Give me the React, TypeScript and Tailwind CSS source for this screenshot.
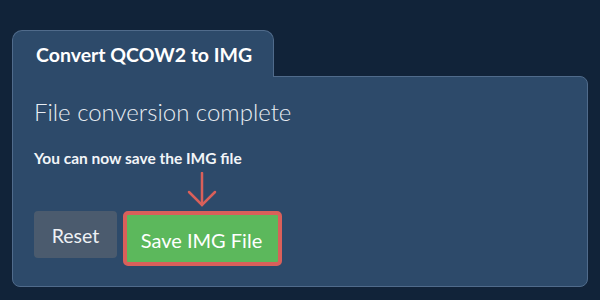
import React from "react";

export default function App() {
  return (
    <div
      className="w-[600px] h-[300px] bg-[#112339] pt-[30px] px-[12px] overflow-hidden"
      style={{ fontFamily: "Lato, 'Open Sans', sans-serif" }}
    >
      <div className="relative z-10 -mb-px w-[262px] h-[47px] bg-[#2d4a6a] border border-b-0 border-[#506b8b] rounded-t-[10px] pl-[23px] flex items-center">
        <span className="text-[19.5px] font-bold text-white leading-none pt-[2px] whitespace-nowrap">Convert QCOW2 to IMG</span>
      </div>
      <div className="h-[211px] bg-[#2d4a6a] border border-[#506b8b] rounded-b-[8px] rounded-tr-[8px] px-[21px] pt-[20px]">
        <div className="text-[24px] leading-[29px] font-light text-[#e8edf2] whitespace-nowrap">File conversion complete</div>
        <div className="mt-[23px] text-[15.5px] leading-[18px] font-bold text-[#f2f5f8] whitespace-nowrap">You can now save the IMG file</div>
        <div className="mt-[44px] flex items-start">
          <button className="w-[83px] h-[47px] rounded-[4px] bg-[#4b5b6e] text-[19.5px] text-[#eef1f4] leading-none whitespace-nowrap pt-[2px]">Reset</button>
          <div className="relative ml-[6px]">
            <svg
              className="absolute left-[64px] -top-[39px]"
              width="30"
              height="36"
              viewBox="0 0 30 36"
              fill="none"
              stroke="#d9605a"
              strokeWidth="2.5"
              strokeLinecap="round"
              strokeLinejoin="miter"
            >
              <path d="M15 1 V33" />
              <path d="M2 20 L15 33 L28 20" />
            </svg>
            <button className="w-[159px] h-[55px] rounded-[5px] border-[4px] border-[#d9605a] bg-[#5cb85c] text-[20px] text-white leading-none pt-[2px] whitespace-nowrap flex items-center justify-center pr-[2px]">
              Save IMG File
            </button>
          </div>
        </div>
      </div>
    </div>
  );
}
